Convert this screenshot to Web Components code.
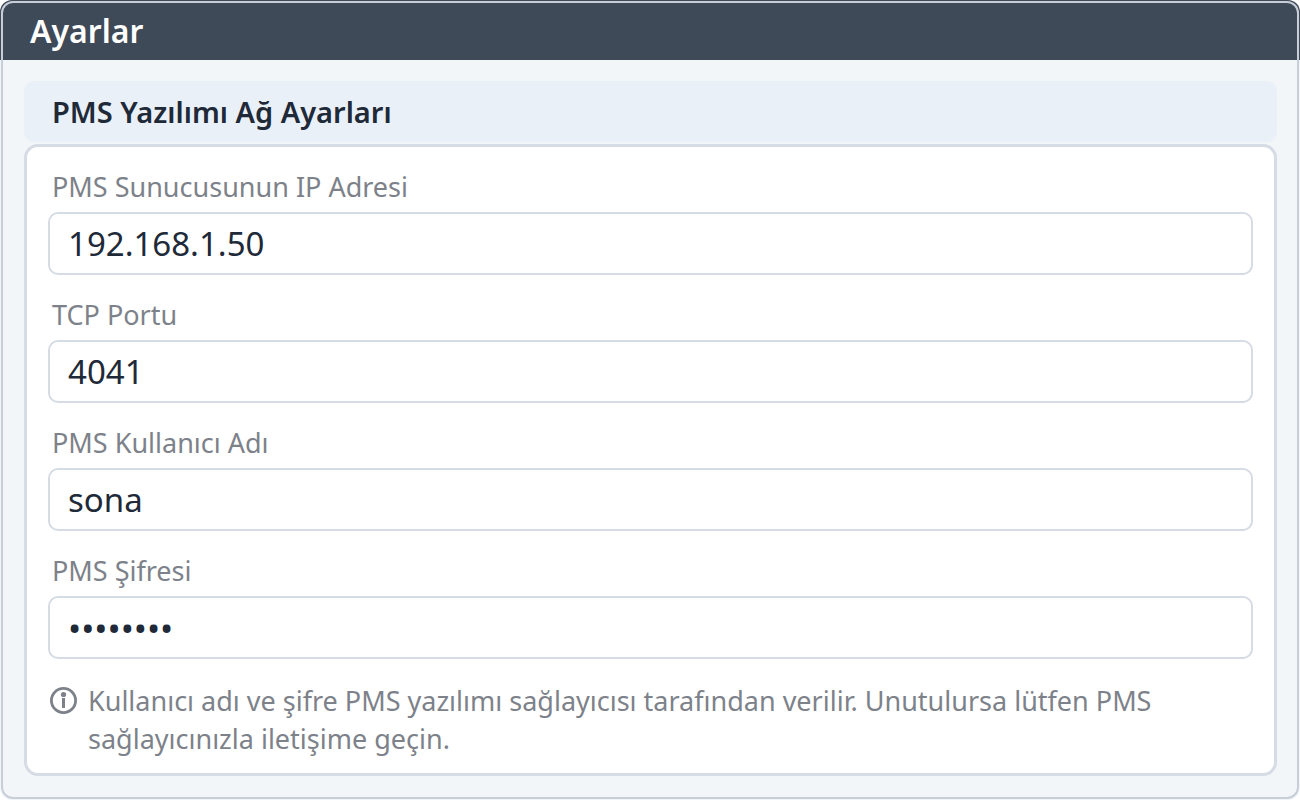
<!DOCTYPE html>
<html lang="tr">
<head>
<meta charset="utf-8">
<meta name="viewport" content="width=device-width, initial-scale=1">
<title>Ayarlar</title>
<style>
  body {
    margin: 0;
    background: #fff;
    color: #202938;
    font-family: "Noto Sans", "Open Sans", sans-serif;
    --line: #d6dce3;
    --muted: #7d828a;
  }
</style>
</head>
<body>
<settings-window heading="Ayarlar">
  <settings-section heading="PMS Yazılımı Ağ Ayarları">
    <settings-field label="PMS Sunucusunun IP Adresi" value="192.168.1.50"></settings-field>
    <settings-field label="TCP Portu" value="4041"></settings-field>
    <settings-field label="PMS Kullanıcı Adı" value="sona"></settings-field>
    <settings-field label="PMS Şifresi" type="password" value="password"></settings-field>
    <info-note>Kullanıcı adı ve şifre PMS yazılımı sağlayıcısı tarafından verilir. Unutulursa lütfen PMS sağlayıcınızla iletişime geçin.</info-note>
  </settings-section>
</settings-window>

<template id="window-template">
  <style>
    :host {
      display: block;
      position: relative;
      box-sizing: border-box;
      min-height: 100vh;
      background: #f3f6f8;
      border-radius: 12px;
      overflow: hidden;
    }
    :host::after {
      content: "";
      position: absolute;
      inset: 1px;
      border: 2px solid #c7ced8;
      border-radius: 12px;
      pointer-events: none;
    }
    header {
      padding: 11px 30px 9px;
      background: #3f4a58;
      color: #fff;
    }
    h1 { margin: 0; font-size: 32px; line-height: 40px; font-weight: 600; }
    main { padding: 21px 23px 24px 24px; }
  </style>
  <header><h1></h1></header>
  <main><slot></slot></main>
</template>

<template id="section-template">
  <style>
    :host { display: flex; flex-direction: column; gap: 2px; }
    h2 {
      margin: 0;
      padding: 13px 28px 12px;
      border-radius: 10px;
      background: #eaf0f7;
      font-size: 29px;
      line-height: 36px;
      font-weight: 600;
    }
    .card {
      display: flex;
      flex-direction: column;
      gap: 23px;
      padding: 23px 21px 15px;
      border: 3px solid var(--line);
      border-radius: 14px;
      background: #fff;
    }
  </style>
  <h2></h2>
  <div class="card"><slot></slot></div>
</template>

<template id="field-template">
  <style>
    :host { display: flex; flex-direction: column; gap: 8px; }
    label {
      padding: 0 4px;
      color: var(--muted);
      font-size: 27px;
      line-height: 34px;
    }
    input {
      box-sizing: border-box;
      width: 100%;
      height: 63px;
      margin: 0;
      padding: 0 18px;
      border: 2px solid var(--line);
      border-radius: 10px;
      outline: none;
      background: #fff;
      color: inherit;
      font-family: inherit;
      font-size: 33px;
    }
    input[type="password"] { font-size: 35px; }
  </style>
  <label for="control"></label>
  <input id="control">
</template>

<template id="note-template">
  <style>
    :host {
      display: flex;
      gap: 11px;
      padding: 0 2px;
      color: var(--muted);
      font-size: 27px;
      line-height: 38px;
    }
    svg { flex: none; width: 27px; height: 38px; }
    p { margin: 0; }
  </style>
  <svg viewBox="0 0 27 38" aria-hidden="true">
    <circle cx="13.5" cy="18.5" r="12.1" fill="none" stroke="currentColor" stroke-width="2.8"/>
    <circle cx="13.5" cy="12.5" r="2.6" fill="currentColor"/>
    <rect x="12" y="16" width="3" height="10" fill="currentColor"/>
  </svg>
  <p><slot></slot></p>
</template>

<script>
  class TemplateElement extends HTMLElement {
    constructor() {
      super();
      const template = document.getElementById(this.constructor.template);
      this.attachShadow({ mode: "open" }).append(template.content.cloneNode(true));
    }
  }

  class SettingsWindow extends TemplateElement {
    static template = "window-template";
    connectedCallback() {
      this.shadowRoot.querySelector("h1").textContent = this.getAttribute("heading");
    }
  }

  class SettingsSection extends TemplateElement {
    static template = "section-template";
    connectedCallback() {
      this.shadowRoot.querySelector("h2").textContent = this.getAttribute("heading");
    }
  }

  class SettingsField extends TemplateElement {
    static template = "field-template";
    connectedCallback() {
      const input = this.shadowRoot.querySelector("input");
      this.shadowRoot.querySelector("label").textContent = this.getAttribute("label");
      input.type = this.getAttribute("type") || "text";
      input.value = this.getAttribute("value") || "";
    }
  }

  class InfoNote extends TemplateElement {
    static template = "note-template";
  }

  customElements.define("settings-window", SettingsWindow);
  customElements.define("settings-section", SettingsSection);
  customElements.define("settings-field", SettingsField);
  customElements.define("info-note", InfoNote);
</script>
</body>
</html>
